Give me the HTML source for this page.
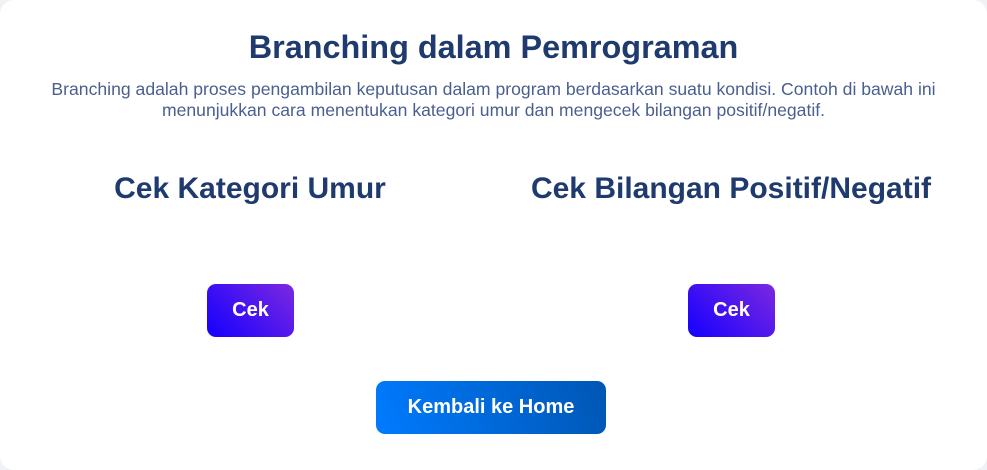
<!DOCTYPE html>
<html><head><style>
html,body{margin:0;padding:0;background:#f0f2f5;width:987px;height:460px;overflow:hidden;font-family:"Liberation Sans",Arial,sans-serif}
.card{position:absolute;left:0;top:0;width:987px;height:470px;background:#fff;border-radius:14px}
.t{position:absolute;left:0;width:987px;text-align:center;color:#1e3a6e}
h1{margin:0;font-size:32.4px;font-weight:bold;top:29px}
.p{font-size:17.6px;color:#4a5f90;line-height:21px;top:79px}
.h{position:absolute;font-size:30px;font-weight:bold;color:#1e3a6e;text-align:center;top:172px;width:480px}
.b{position:absolute;top:284px;width:87px;height:53px;border-radius:9px;background:linear-gradient(45deg,#1400ff,#7d28e0);color:#fff;font-weight:bold;font-size:20px;text-align:center;line-height:53px}
.k{position:absolute;left:376px;top:381px;width:230px;height:53px;border-radius:9px;background:linear-gradient(70deg,#007bff,#0056b3);color:#fff;font-weight:bold;font-size:20px;text-align:center;line-height:53px}
</style></head><body>
<div class="card">
<h1 class="t">Branching dalam Pemrograman</h1>
<div class="t p">Branching adalah proses pengambilan keputusan dalam program berdasarkan suatu kondisi. Contoh di bawah ini<br>menunjukkan cara menentukan kategori umur dan mengecek bilangan positif/negatif.</div>
<div class="h" style="left:10px">Cek Kategori Umur</div>
<div class="h" style="left:491px">Cek Bilangan Positif/Negatif</div>
<div class="b" style="left:207px">Cek</div>
<div class="b" style="left:688px">Cek</div>
<div class="k">Kembali ke Home</div>
</div>
</body></html>
